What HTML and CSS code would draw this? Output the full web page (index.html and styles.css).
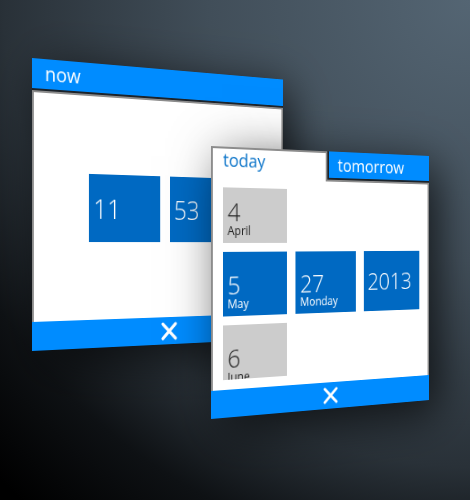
FILE: index.html
```
<!DOCTYPE html>
<html lang="en">
<head>
<meta charset="utf-8">
<title>Date and time pickers</title>
<link rel="stylesheet" href="styles.css">
</head>
<body>
<main class="stage">
  <section class="window window-time">
    <header class="tabs">
      <button class="tab" type="button">now</button>
    </header>
    <div class="body">
      <div class="reel"><div class="tile"><span class="number">11</span></div></div>
      <div class="reel"><div class="tile"><span class="number">53</span></div></div>
    </div>
    <footer class="footer">
      <button class="close" type="button" aria-label="Close">
        <svg viewBox="0 0 18 18"><path d="M2 2L16 16M16 2L2 16"/></svg>
      </button>
    </footer>
  </section>

  <section class="window window-date">
    <header class="tabs">
      <button class="tab tab-active" type="button">today</button>
      <button class="tab" type="button">tomorrow</button>
    </header>
    <div class="body">
      <div class="reel">
        <div class="tile tile-muted"><span class="number">4</span><span class="label">April</span></div>
        <div class="tile"><span class="number">5</span><span class="label">May</span></div>
        <div class="tile tile-muted"><span class="number">6</span><span class="label">June</span></div>
      </div>
      <div class="reel">
        <div class="tile"><span class="number">27</span><span class="label">Monday</span></div>
      </div>
      <div class="reel">
        <div class="tile"><span class="number">2013</span></div>
      </div>
    </div>
    <footer class="footer">
      <button class="close" type="button" aria-label="Close">
        <svg viewBox="0 0 18 18"><path d="M2 2L16 16M16 2L2 16"/></svg>
      </button>
    </footer>
  </section>
</main>
</body>
</html>
```
FILE: styles.css
```
* {
  box-sizing: border-box;
}

body {
  margin: 0;
  font-family: "Open Sans", "Noto Sans", sans-serif;
}

button {
  border: 0;
  padding: 0;
  font: inherit;
  color: inherit;
  background: none;
}

.stage {
  position: relative;
  min-height: 100vh;
  overflow: hidden;
  background: radial-gradient(circle at top right, #546573 0, #414e59 38%, #293138 68%, #0e1114 82%, #000 98%);
}

/* Windows float freely on the stage, each turned away at its right edge. */
.window {
  position: absolute;
  display: flex;
  flex-direction: column;
  background: #1b2229;
  box-shadow: 12px 12px 50px rgba(0, 0, 0, 0.7);
}

.window-time {
  left: 32px;
  top: 58px;
  width: 65%;
  transform-origin: 0 186px;
  transform: perspective(876px) rotateY(22deg);
}

.window-date {
  left: 211px;
  top: 146px;
  width: 56%;
  transform-origin: 0 94px;
  transform: perspective(832px) rotateY(22deg);
}

.tabs {
  display: flex;
}

.tab {
  flex: 1;
  height: 28px;
  margin-bottom: 2px;
  padding: 0 11px;
  text-align: left;
  font-size: 18px;
  line-height: 28px;
  color: #fff;
  background: #008cff;
}

.window-time .tab {
  height: 30px;
  padding: 0 14px;
  font-size: 20px;
}

.window-date .tab:not(.tab-active) {
  margin-left: 2px;
}

.window-date .tab-active {
  z-index: 1;
  height: 32px;
  margin-bottom: -2px;
  padding: 0 11px 8px;
  border: 2px solid #8c8c8c;
  border-bottom: 0;
  line-height: 22px;
  color: #0b74c9;
  background: #fff;
}

.body {
  display: grid;
  grid-template-columns: repeat(3, 1fr);
  gap: 10px;
  height: 215px;
  padding: 9px 11px 10px;
  border: 2px solid #8c8c8c;
  border-bottom: 0;
  background: #fff;
}

.window-time .body {
  grid-template-columns: repeat(2, 1fr);
  gap: 12px;
  height: 232px;
  padding: 0 61px;
}

.reel {
  display: flex;
  flex-direction: column;
  justify-content: center;
  gap: 9px;
  min-width: 0;
  min-height: 0;
  overflow: hidden;
}

.tile {
  display: flex;
  flex: none;
  flex-direction: column;
  justify-content: center;
  height: 65px;
  padding: 0 5px;
  color: #fff;
  background: #0069c2;
}

.tile:has(.label) {
  justify-content: flex-end;
  padding-bottom: 4px;
}

.window-time .tile {
  height: 70px;
}

.tile-muted {
  color: #222;
  background: #ccc;
}

.number {
  font-size: 25px;
  font-weight: 300;
  line-height: 24px;
}

.window-time .number {
  font-size: 28px;
}

.label {
  font-size: 12px;
  line-height: 16px;
}

.footer {
  display: flex;
  justify-content: center;
  height: 28px;
  padding-left: 10px;
  background: #008cff;
}

.window-time .footer {
  height: 29px;
}

.close {
  display: flex;
  align-items: center;
}

.close svg {
  width: 18px;
  height: 18px;
  fill: none;
  stroke: #fff;
  stroke-width: 3;
  stroke-linecap: round;
}

.window-time .close svg {
  width: 20px;
  height: 20px;
}
```
